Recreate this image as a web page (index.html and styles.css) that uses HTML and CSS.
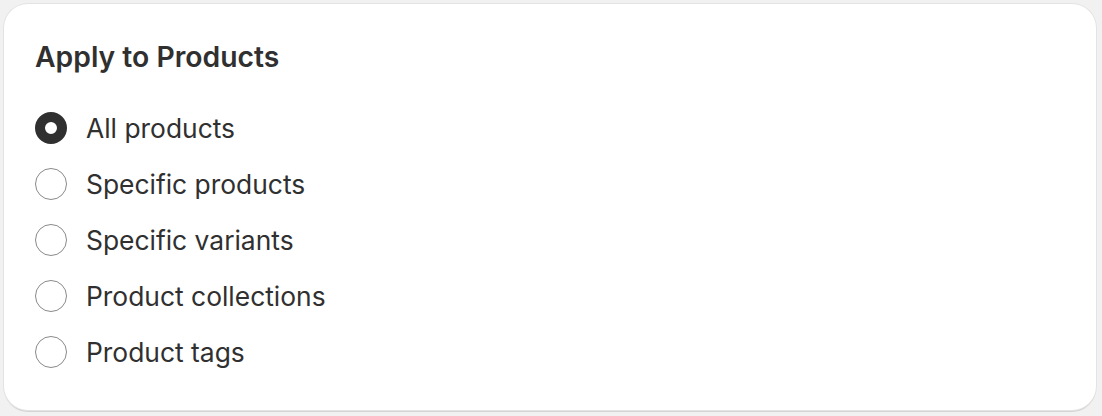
FILE: index.html
```html
<!DOCTYPE html>
<html lang="en">
<head>
  <meta charset="UTF-8">
  <title>Apply to Products</title>
  <link rel="stylesheet" href="styles.css">
</head>
<body>
  <section class="card">
    <h2>Apply to Products</h2>
    <div class="choices">
      <label class="choice">
        <input type="radio" name="apply" value="all" checked>
        <span class="dot"></span>
        <span>All products</span>
      </label>
      <label class="choice">
        <input type="radio" name="apply" value="products">
        <span class="dot"></span>
        <span>Specific products</span>
      </label>
      <label class="choice">
        <input type="radio" name="apply" value="variants">
        <span class="dot"></span>
        <span>Specific variants</span>
      </label>
      <label class="choice">
        <input type="radio" name="apply" value="collections">
        <span class="dot"></span>
        <span>Product collections</span>
      </label>
      <label class="choice">
        <input type="radio" name="apply" value="tags">
        <span class="dot"></span>
        <span>Product tags</span>
      </label>
    </div>
  </section>
</body>
</html>
```

FILE: styles.css
```css
body{
  margin: 0;
  padding: 4px 6px 6px 4px;
  background-color: #f1f1f1;
  font-family: Inter, "Noto Sans", sans-serif;
  color: #303030;
}
.card{
  background: #fff;
  border-radius: 24px;
  padding: 33px 31px 28px;
  box-shadow: 0 0 0 1px #e3e3e3, 0 2px 0 #d4d4d4;
  height: 345px;
}
h2{
  margin: 0 0 31px;
  font-size: 28.3px;
  line-height: 40px;
  font-weight: 600;
}
.choices{
  display: flex;
  flex-direction: column;
  gap: 16px;
}
.choice{
  display: flex;
  align-items: center;
  gap: 19px;
  font-size: 26.4px;
  line-height: 40px;
  cursor: pointer;
}
.choice input{
  display: none;
}
.dot{
  width: 32px;
  height: 32px;
  box-sizing: border-box;
  border-radius: 50%;
  border: 1px solid #8a8a8a;
  flex-shrink: 0;
}
.choice input:checked + .dot{
  border: 10px solid #303030;
}
```
